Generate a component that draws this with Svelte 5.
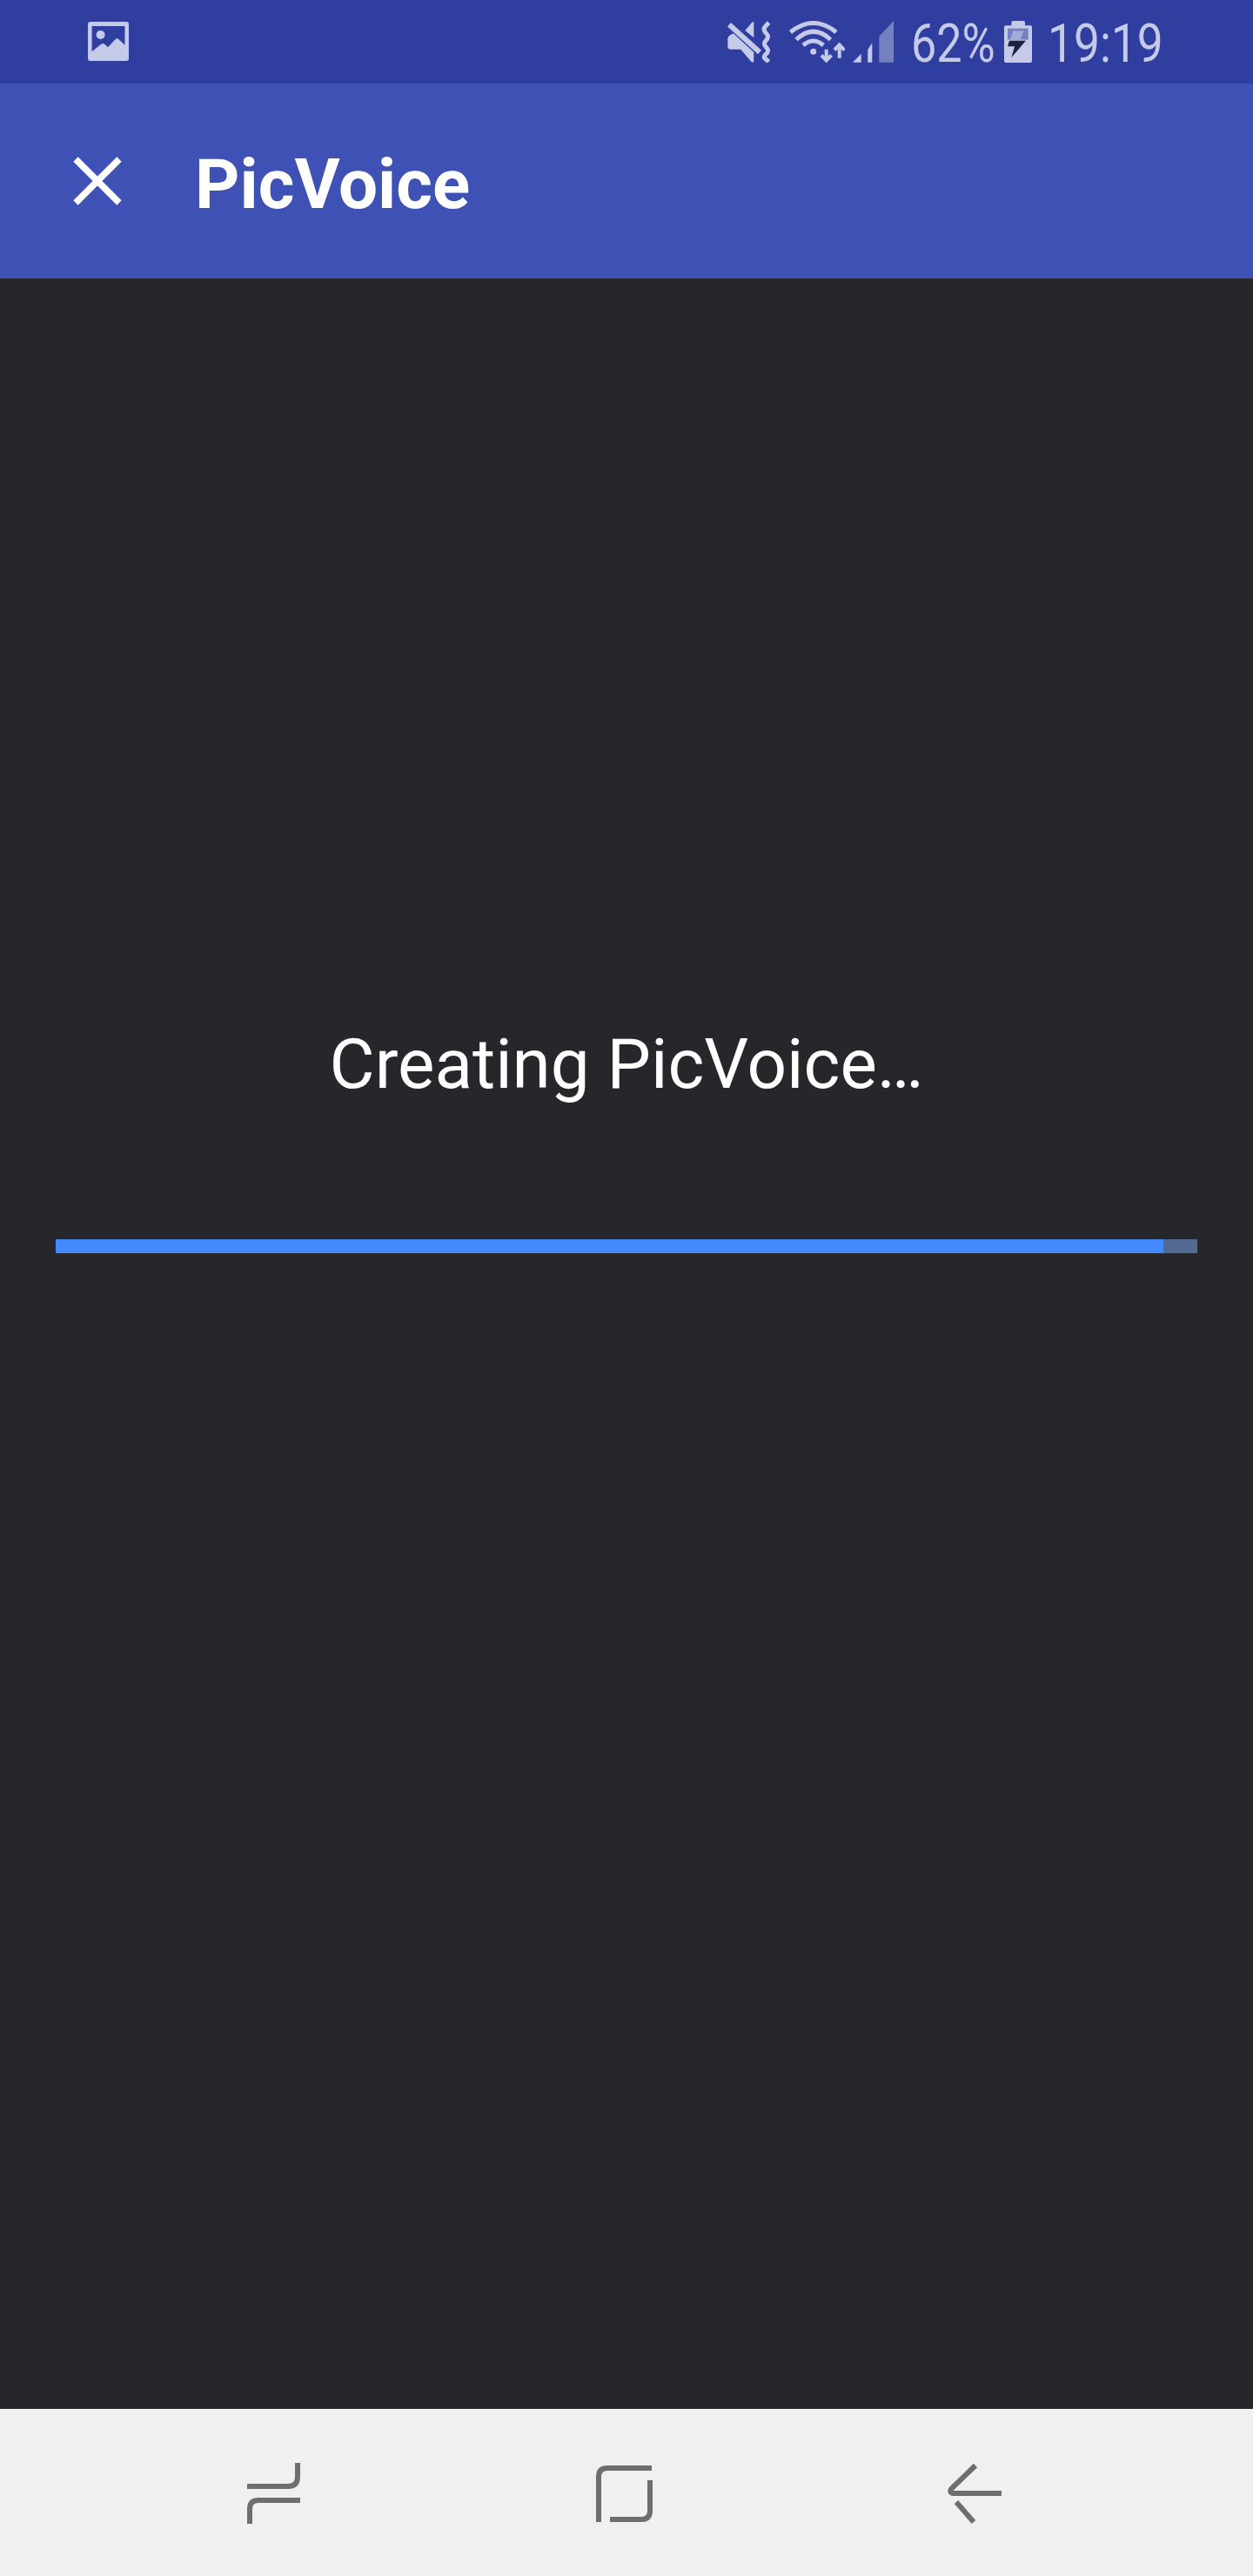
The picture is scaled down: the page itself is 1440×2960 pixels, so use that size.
<script>
  const progress = 97;
</script>

<div class="page">
  <header class="status">
    <svg class="ic-image" viewBox="0 0 47 45" width="47" height="45">
      <rect width="47" height="45" rx="3" fill="#C5CAE9" />
      <path d="M4.6 5H42.5V26.7L35 19.8Q33.4 18.6 32 19.8L23 29.3L19 25.6Q17.2 24.4 15.6 25.6L4.6 34.3Z" fill="#303F9F" />
      <circle cx="14.6" cy="15" r="5" fill="#C5CAE9" />
    </svg>
    <div class="cluster">
      <svg class="ic-mute" viewBox="0 0 50 48" width="50" height="48">
        <path d="M2 4.3L37 36" stroke="#C5CAE9" stroke-width="6" fill="none" />
        <path d="M30.3 1V19.3L20.3 11L28.5 1.5Z" fill="#C5CAE9" />
        <path d="M1.5 17.7Q3.5 15.5 7 14.6L30.3 36V46Q30.3 48.5 27.5 47L15.3 32.7H3.7Q0.3 32.7 0.3 29.3V20Z" fill="#C5CAE9" />
        <path d="M47.5 2L43 7Q41 10 43.5 13L45.5 15.5Q47.5 18 45.5 21L43.5 23.5Q41.5 26 43.5 29L45.5 31.5Q47.5 34 45.5 37L43 39.5Q41.5 42 43.5 43.5L47.5 47" stroke="#C5CAE9" stroke-width="5" fill="none" />
      </svg>
      <svg class="ic-wifi" viewBox="0 0 64 48" width="64" height="48">
        <g stroke="#C5CAE9" stroke-width="5" fill="none">
          <path d="M1.5 13Q27.7 -8 54 13" />
          <path d="M8 21.5Q27.7 3 47.5 21.5" />
          <path d="M16 28Q27.7 18 39.3 28" />
        </g>
        <circle cx="27.7" cy="35.3" r="3.5" fill="#C5CAE9" />
        <path d="M42.7 32.7V45M37 39.5L42.7 45.5L48.5 39.5" stroke="#C5CAE9" stroke-width="4" fill="none" />
        <path d="M57.7 42.7V28M52 33.5L57.7 27.5L63.5 33.5" stroke="#C5CAE9" stroke-width="4" fill="none" />
      </svg>
      <svg class="ic-signal" viewBox="0 0 47 48" width="47" height="48">
        <path d="M0 47.7L9.7 37.7V47.7Z" fill="#C5CAE9" />
        <path d="M17.3 47.7V33L22.3 25.3V47.7Z" fill="#C5CAE9" />
        <path d="M30.3 47.7V17.7L47 0V47.7Z" fill="#7580C0" />
      </svg>
      <span class="stat pct">62%</span>
      <svg class="ic-battery" viewBox="0 0 32 48" width="32" height="48">
        <rect x="8.4" y="0" width="15.6" height="8" rx="2" fill="#C5CAE9" />
        <rect x="0" y="5.3" width="32" height="42.7" rx="2" fill="#C5CAE9" />
        <rect x="4" y="8.7" width="23.7" height="12.8" fill="#7580C0" />
        <path d="M10.6 11.5H22.7L18.4 21.5H7Z" fill="#A3ACD8" />
        <path d="M6 22.7H25L8.4 42L12 29.3H4Z" fill="#1C2340" />
      </svg>
      <span class="stat time">19:19</span>
    </div>
  </header>

  <div class="toolbar">
    <svg class="ic-close" viewBox="0 0 56 56" width="56" height="56">
      <path d="M3 3L53 53M53 3L3 53" stroke="#fff" stroke-width="7.5" fill="none" />
    </svg>
    <h1>PicVoice</h1>
  </div>

  <main>
    <p>Creating PicVoice…</p>
    <div class="track">
      <div class="fill" style="width: {progress}%"></div>
    </div>
  </main>

  <nav>
    <svg viewBox="0 0 61 70" width="61" height="70">
      <path d="M58 0V16Q58 27 47 27H0" />
      <path d="M3 70V53Q3 43 13 43H61" />
    </svg>
    <svg viewBox="0 0 65 65" width="65" height="65">
      <path d="M64 3H13Q3 3 3 13V65" />
      <path d="M16 62H52Q62 62 62 52V17" />
    </svg>
    <svg viewBox="0 0 61 68" width="61" height="68">
      <path d="M31 2L4 28Q-1 34 8 34H61" />
      <path d="M9 44L29 67" />
    </svg>
  </nav>
</div>

<style>
  :global(body) {
    margin: 0;
    background: #26272b;
  }

  .page {
    display: flex;
    flex-direction: column;
    height: 2960px;
    font-family: Roboto, sans-serif;
  }

  .status {
    display: flex;
    align-items: center;
    flex: none;
    height: 96px;
    padding: 0 108px 0 101px;
    box-sizing: border-box;
    background: #303f9f;
  }

  .ic-image { margin-top: -1px; }

  .cluster {
    display: flex;
    align-items: center;
    margin-left: auto;
    height: 48px;
  }

  .ic-wifi { margin-left: 21px; }
  .ic-signal { margin-left: 9px; }
  .ic-battery { margin-left: 14px; }

  .stat {
    display: inline-block;
    padding-top: 3px;
    font-size: 62px;
    line-height: 48px;
    color: #c5cae9;
    white-space: nowrap;
    transform-origin: left center;
  }

  .pct {
    width: 93px;
    margin-left: 20px;
    transform: scaleX(0.84);
  }

  .time {
    width: 128px;
    margin-left: 18px;
    transform: scaleX(0.86);
  }

  .toolbar {
    display: flex;
    align-items: center;
    flex: none;
    height: 224px;
    padding-left: 84px;
    box-sizing: border-box;
    background: #3f51b5;
  }

  h1 {
    margin: 8px 0 0 84px;
    font-size: 80px;
    font-weight: 700;
    line-height: 94px;
    color: #fff;
  }

  main {
    flex: 1;
    padding: 856px 64px 0;
  }

  p {
    margin: 0;
    font-size: 80px;
    line-height: 94px;
    text-align: center;
    color: #fff;
  }

  .track {
    height: 16px;
    margin-top: 154px;
    background: #536b93;
  }

  .fill {
    height: 100%;
    background: #448aff;
  }

  nav {
    display: flex;
    align-items: center;
    justify-content: space-between;
    flex: none;
    height: 192px;
    padding: 2px 289px 0 284px;
    box-sizing: border-box;
    background: #f0f0f0;
  }

  nav svg {
    overflow: visible;
  }

  nav path {
    fill: none;
    stroke: #6e6e6e;
    stroke-width: 6;
  }
</style>
